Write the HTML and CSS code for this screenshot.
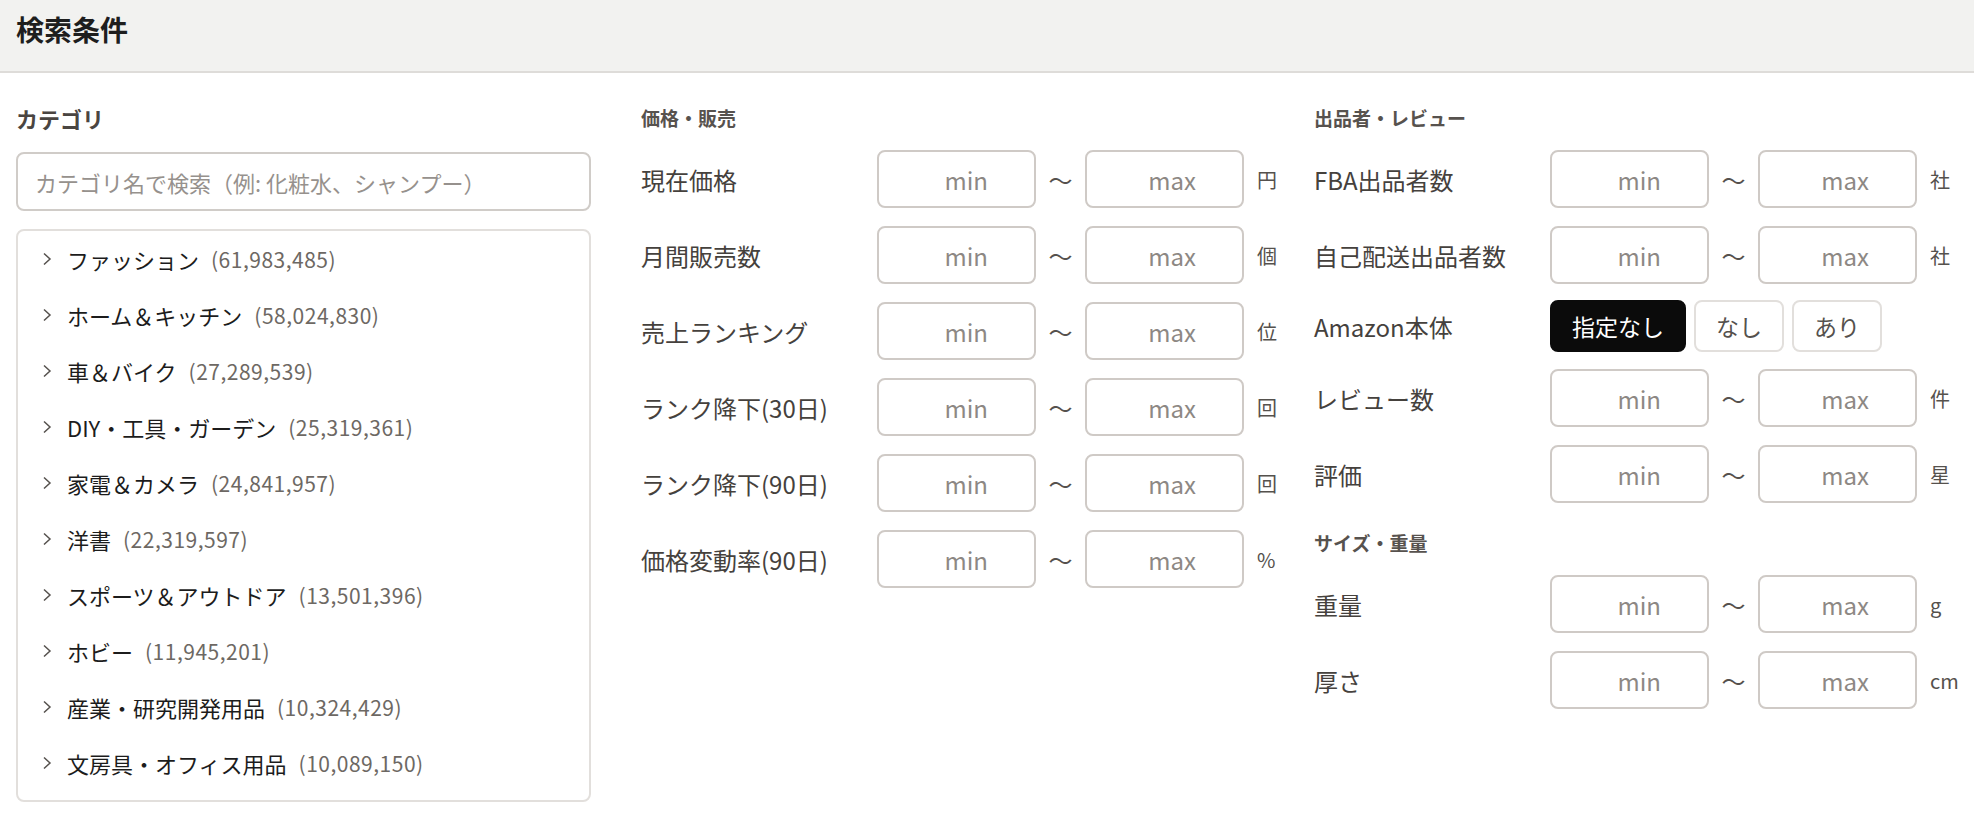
FILE: index.html
```html
<!DOCTYPE html>
<html lang="ja">
<head>
<meta charset="utf-8">
<title>検索条件</title>
<link rel="stylesheet" href="styles.css">
</head>
<body>
<header class="header"><h1 class="title">検索条件</h1></header>
<main class="main">
  <section class="col col-cat">
    <h2 class="cat-title">カテゴリ</h2>
    <input class="cat-search" type="text" placeholder="カテゴリ名で検索（例: 化粧水、シャンプー）">
    <ul class="cat-list">
      <li class="cat-item"><svg class="chev" viewBox="0 0 10 14"><polyline points="2,1.5 8,7 2,12.5"/></svg><span class="cat-name">ファッション</span><span class="cat-count">(61,983,485)</span></li>
      <li class="cat-item"><svg class="chev" viewBox="0 0 10 14"><polyline points="2,1.5 8,7 2,12.5"/></svg><span class="cat-name">ホーム＆キッチン</span><span class="cat-count">(58,024,830)</span></li>
      <li class="cat-item"><svg class="chev" viewBox="0 0 10 14"><polyline points="2,1.5 8,7 2,12.5"/></svg><span class="cat-name">車＆バイク</span><span class="cat-count">(27,289,539)</span></li>
      <li class="cat-item"><svg class="chev" viewBox="0 0 10 14"><polyline points="2,1.5 8,7 2,12.5"/></svg><span class="cat-name">DIY・工具・ガーデン</span><span class="cat-count">(25,319,361)</span></li>
      <li class="cat-item"><svg class="chev" viewBox="0 0 10 14"><polyline points="2,1.5 8,7 2,12.5"/></svg><span class="cat-name">家電＆カメラ</span><span class="cat-count">(24,841,957)</span></li>
      <li class="cat-item"><svg class="chev" viewBox="0 0 10 14"><polyline points="2,1.5 8,7 2,12.5"/></svg><span class="cat-name">洋書</span><span class="cat-count">(22,319,597)</span></li>
      <li class="cat-item"><svg class="chev" viewBox="0 0 10 14"><polyline points="2,1.5 8,7 2,12.5"/></svg><span class="cat-name">スポーツ＆アウトドア</span><span class="cat-count">(13,501,396)</span></li>
      <li class="cat-item"><svg class="chev" viewBox="0 0 10 14"><polyline points="2,1.5 8,7 2,12.5"/></svg><span class="cat-name">ホビー</span><span class="cat-count">(11,945,201)</span></li>
      <li class="cat-item"><svg class="chev" viewBox="0 0 10 14"><polyline points="2,1.5 8,7 2,12.5"/></svg><span class="cat-name">産業・研究開発用品</span><span class="cat-count">(10,324,429)</span></li>
      <li class="cat-item"><svg class="chev" viewBox="0 0 10 14"><polyline points="2,1.5 8,7 2,12.5"/></svg><span class="cat-name">文房具・オフィス用品</span><span class="cat-count">(10,089,150)</span></li>
    </ul>
  </section>

  <section class="col col-form">
    <h3 class="sec-title">価格・販売</h3>
    <div class="row"><span class="label">現在価格</span><input class="num" placeholder="min"><span class="tilde">〜</span><input class="num" placeholder="max"><span class="unit">円</span></div>
    <div class="row"><span class="label">月間販売数</span><input class="num" placeholder="min"><span class="tilde">〜</span><input class="num" placeholder="max"><span class="unit">個</span></div>
    <div class="row"><span class="label">売上ランキング</span><input class="num" placeholder="min"><span class="tilde">〜</span><input class="num" placeholder="max"><span class="unit">位</span></div>
    <div class="row"><span class="label">ランク降下(30日)</span><input class="num" placeholder="min"><span class="tilde">〜</span><input class="num" placeholder="max"><span class="unit">回</span></div>
    <div class="row"><span class="label">ランク降下(90日)</span><input class="num" placeholder="min"><span class="tilde">〜</span><input class="num" placeholder="max"><span class="unit">回</span></div>
    <div class="row"><span class="label">価格変動率(90日)</span><input class="num" placeholder="min"><span class="tilde">〜</span><input class="num" placeholder="max"><span class="unit">%</span></div>
  </section>

  <section class="col col-form">
    <h3 class="sec-title">出品者・レビュー</h3>
    <div class="row"><span class="label">FBA出品者数</span><input class="num" placeholder="min"><span class="tilde">〜</span><input class="num" placeholder="max"><span class="unit">社</span></div>
    <div class="row"><span class="label">自己配送出品者数</span><input class="num" placeholder="min"><span class="tilde">〜</span><input class="num" placeholder="max"><span class="unit">社</span></div>
    <div class="row row-btn"><span class="label">Amazon本体</span>
      <div class="seg"><button class="seg-btn is-active">指定なし</button><button class="seg-btn">なし</button><button class="seg-btn">あり</button></div>
    </div>
    <div class="row"><span class="label">レビュー数</span><input class="num" placeholder="min"><span class="tilde">〜</span><input class="num" placeholder="max"><span class="unit">件</span></div>
    <div class="row"><span class="label">評価</span><input class="num" placeholder="min"><span class="tilde">〜</span><input class="num" placeholder="max"><span class="unit">星</span></div>
    <h3 class="sec-title sec-sub">サイズ・重量</h3>
    <div class="row"><span class="label">重量</span><input class="num" placeholder="min"><span class="tilde">〜</span><input class="num" placeholder="max"><span class="unit">g</span></div>
    <div class="row"><span class="label">厚さ</span><input class="num" placeholder="min"><span class="tilde">〜</span><input class="num" placeholder="max"><span class="unit">cm</span></div>
  </section>
</main>
</body>
</html>
```

FILE: styles.css
```css
* { box-sizing: border-box; }
html, body { margin: 0; padding: 0; }
body {
  background: #ffffff;
  font-family: "Noto Sans CJK JP", "Noto Sans", sans-serif;
  color: #3c3834;
}
.header {
  height: 73px;
  background: #f2f2f0;
  border-bottom: 2px solid #dedcd9;
  display: flex;
  align-items: center;
  padding: 0 16px 14px;
}
.title {
  margin: 0;
  font-size: 28px;
  font-weight: 700;
  color: #1e1e1e;
  line-height: 36px;
}
.main {
  display: grid;
  grid-template-columns: 575px 623px 1fr;
  column-gap: 50px;
  padding: 31px 16px 0;
}
.col { min-width: 0; }
.cat-title {
  margin: 0 0 20px;
  font-size: 22px;
  line-height: 28px;
  font-weight: 700;
  color: #4a4541;
}
.cat-search {
  display: block;
  width: 100%;
  height: 59px;
  border: 2px solid #d0ccc8;
  border-radius: 8px;
  padding: 0 0 0 17px;
  font-family: inherit;
  font-size: 22px;
  color: #333;
  outline: none;
  margin: 0 0 18px;
}
.cat-search::placeholder { color: #96918d; }
.cat-list {
  list-style: none;
  margin: 0;
  padding: 0 0 9px;
  border: 2px solid #e2dfdc;
  border-radius: 8px;
}
.cat-item {
  height: 56px;
  display: flex;
  align-items: center;
  padding-left: 24px;
}
.chev {
  width: 10px;
  height: 14px;
  fill: none;
  stroke: #55514d;
  stroke-width: 1.5;
  margin-right: 15px;
  flex: none;
}
.cat-name {
  font-size: 22px;
  color: #1c1c1c;
}
.cat-count {
  font-size: 21px;
  color: #6d6863;
  margin-left: 12px;
  letter-spacing: 0.5px;
}
.col-form {
  display: flex;
  flex-direction: column;
  gap: 18px;
}
.sec-title {
  margin: 0;
  font-size: 19px;
  line-height: 28px;
  font-weight: 700;
  color: #57524e;
}
.sec-sub { margin-top: 8px; }
.row {
  display: grid;
  grid-template-columns: 236px 159px 49px 159px auto;
  align-items: center;
}
.row-btn {
  grid-template-columns: 236px auto;
  margin: -2px 0 -1px;
}
.label {
  font-size: 24px;
  color: #45413d;
  white-space: nowrap;
}
.num {
  height: 58px;
  width: 159px;
  border: 2px solid #cfcac6;
  border-radius: 8px;
  font-family: inherit;
  font-size: 24px;
  text-align: right;
  padding: 0 46px 0 0;
  outline: none;
  background: #fff;
}
.num::placeholder { color: #8d8884; }
.tilde {
  text-align: center;
  font-size: 24px;
  color: #55514d;
}
.unit {
  margin-left: 13px;
  font-size: 20px;
  color: #55514d;
}
.seg {
  display: flex;
  gap: 8px;
}
.seg-btn {
  height: 52px;
  padding: 0 20px;
  border: 2px solid #e2dfdc;
  border-radius: 8px;
  background: #fff;
  font-family: inherit;
  font-size: 23px;
  color: #55514d;
  cursor: pointer;
}
.seg-btn.is-active {
  background: #0b0b0b;
  border-color: #0b0b0b;
  color: #ffffff;
}
```
